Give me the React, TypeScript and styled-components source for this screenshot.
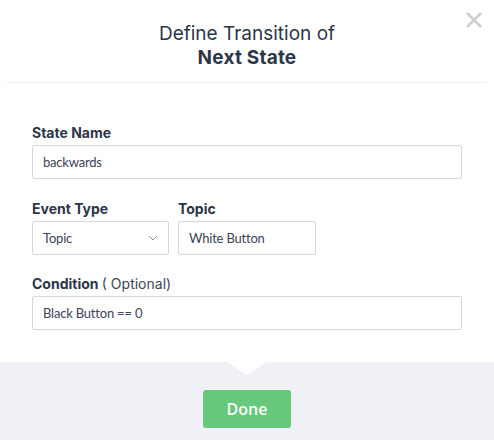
import React from "react";
import styled, { createGlobalStyle } from "styled-components";

const Global = createGlobalStyle`
  html, body { margin: 0; padding: 0; background: #ffffff; }
  body { font-family: "Inter", "Lato", sans-serif; }
  * { box-sizing: border-box; }
`;

const Modal = styled.div`
  width: 494px;
  height: 440px;
  display: flex;
  flex-direction: column;
  background: #fff;
  position: relative;
  overflow: hidden;
`;

const Header = styled.div`
  margin: 0 7px;
  height: 83px;
  border-bottom: 1px solid #eceef2;
  display: flex;
  flex-direction: column;
  align-items: center;
  padding-top: 22px;
  color: #2b3648;
`;

const TitleLine = styled.div<{ $bold?: boolean }>`
  font-size: 19px;
  line-height: 24px;
  font-weight: ${(p) => (p.$bold ? 700 : 400)};
  letter-spacing: ${(p) => (p.$bold ? "0.2px" : "0px")};
`;

const Close = styled.button`
  position: absolute;
  top: 10px;
  right: 10px;
  width: 20px;
  height: 20px;
  padding: 0;
  border: none;
  background: transparent;
  display: flex;
  align-items: center;
  justify-content: center;
`;

const Body = styled.div`
  flex: 1;
  padding: 41px 32px 0 32px;
  display: flex;
  flex-direction: column;
`;

const Field = styled.div<{ $width?: number; $top?: number }>`
  display: flex;
  flex-direction: column;
  gap: 3px;
  width: ${(p) => (p.$width ? `${p.$width}px` : "auto")};
  margin-top: ${(p) => p.$top ?? 0}px;
`;

const Row = styled.div`
  display: flex;
  gap: 9px;
  margin-top: 21px;
`;

const Label = styled.label`
  font-size: 14px;
  line-height: 18px;
  font-weight: 700;
  color: #2b3648;
`;

const Light = styled.span`
  font-weight: 400;
  color: #3a4456;
`;

const Input = styled.div`
  height: 34px;
  border: 1px solid #d6d8dc;
  border-radius: 2px;
  padding: 0 10px;
  display: flex;
  align-items: center;
  justify-content: space-between;
  font-family: "Lato", "Inter", sans-serif;
  font-size: 13px;
  color: #3a4456;
  letter-spacing: -0.2px;
`;

const Footer = styled.div`
  height: 78px;
  background: #f0f1f6;
  position: relative;
  display: flex;
  justify-content: center;
  padding-top: 28px;
`;

const Notch = styled.div`
  position: absolute;
  top: 0;
  left: 227px;
  width: 0;
  height: 0;
  border-left: 20px solid transparent;
  border-right: 20px solid transparent;
  border-top: 13px solid #ffffff;
`;

const DoneButton = styled.button`
  width: 88px;
  height: 38px;
  border: none;
  border-radius: 3px;
  background: #65c87a;
  color: #fff;
  font-family: "Open Sans", "Liberation Sans", sans-serif;
  font-size: 16px;
  font-weight: 600;
`;

export default function App() {
  return (
    <>
      <Global />
      <Modal>
        <Header>
          <TitleLine>Define Transition of</TitleLine>
          <TitleLine $bold>Next State</TitleLine>
        </Header>
        <Close aria-label="close">
          <svg width="18" height="18" viewBox="0 0 18 18">
            <path d="M2 2 L16 16 M16 2 L2 16" stroke="#cfcfcf" strokeWidth="2.6" />
          </svg>
        </Close>
        <Body>
          <Field>
            <Label>State Name</Label>
            <Input>backwards</Input>
          </Field>
          <Row>
            <Field $width={137}>
              <Label>Event Type</Label>
              <Input>
                Topic
                <svg width="10" height="6" viewBox="0 0 10 6">
                  <path d="M1 1 L5 5 L9 1" stroke="#8a909a" strokeWidth="1" fill="none" />
                </svg>
              </Input>
            </Field>
            <Field $width={138}>
              <Label>Topic</Label>
              <Input>White Button</Input>
            </Field>
          </Row>
          <Field $top={20}>
            <Label>
              Condition <Light>( Optional)</Light>
            </Label>
            <Input>Black Button == 0</Input>
          </Field>
        </Body>
        <Footer>
          <Notch />
          <DoneButton>Done</DoneButton>
        </Footer>
      </Modal>
    </>
  );
}
